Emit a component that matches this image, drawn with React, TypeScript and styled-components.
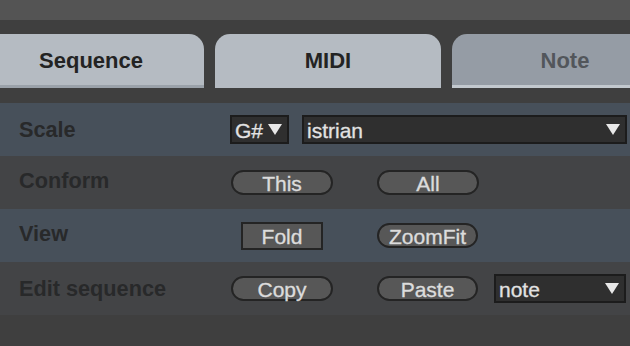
import styled, { createGlobalStyle } from "styled-components";

const GlobalStyle = createGlobalStyle`
  html, body {
    margin: 0;
    padding: 0;
    background: #3f3f3f;
  }
  body {
    font-family: "Liberation Sans", Arial, sans-serif;
  }
`;

const Device = styled.div`
  width: 630px;
  height: 346px;
  background: #3f3f3f;
  overflow: hidden;
  display: flex;
  flex-direction: column;
`;

const TopStrip = styled.div`
  height: 20px;
  background: #545454;
`;

const TabBar = styled.div`
  display: flex;
  gap: 11px;
  margin: 14px 0 15px -22px;
  height: 54px;
`;

interface TabProps {
  variant: "idle" | "active" | "dim";
}

const Tab = styled.div<TabProps>`
  flex: 0 0 226px;
  height: 54px;
  box-sizing: border-box;
  border-radius: 15px 15px 0 0;
  display: flex;
  align-items: center;
  justify-content: center;
  padding-top: 3px;
  font-size: 22px;
  font-weight: bold;
  background: ${(p) => (p.variant === "dim" ? "#959ca5" : "#b5bbc2")};
  color: ${(p) => (p.variant === "dim" ? "#52565b" : "#232323")};
  border-bottom: 3px solid
    ${(p) =>
      p.variant === "idle"
        ? "#9aa1a9"
        : p.variant === "dim"
        ? "#c2c8ce"
        : "#b5bbc2"};
`;

const Row = styled.div<{ tinted?: boolean }>`
  display: grid;
  grid-template-columns: 211px 1fr;
  align-items: center;
  height: 53px;
  padding-left: 19px;
  background: ${(p) => (p.tinted ? "#47505a" : "#434446")};
`;

const Label = styled.div<{ lift?: number }>`
  font-size: 21.7px;
  font-weight: bold;
  color: #28292a;
  margin-top: ${(p) => -(p.lift || 0)}px;
`;

const Controls = styled.div`
  display: flex;
  align-items: center;
`;

interface ButtonProps {
  shape?: "pill" | "square";
  w?: number;
  indent?: number;
}

const Button = styled.div<ButtonProps>`
  box-sizing: border-box;
  width: ${(p) => p.w || 102}px;
  height: ${(p) => (p.shape === "square" ? 28 : 25)}px;
  margin-left: ${(p) => p.indent || 0}px;
  border: 2px solid #242424;
  border-radius: ${(p) => (p.shape === "square" ? "0" : "13px")};
  background: #575757;
  color: #dcdcdc;
  font-size: 21px;
  -webkit-text-stroke: 0.35px #dcdcdc;
  display: flex;
  align-items: center;
  justify-content: center;
  line-height: 1;
  padding-top: 1px;
`;

const Select = styled.div<{ w: number; indent?: number }>`
  box-sizing: border-box;
  width: ${(p) => p.w}px;
  height: 29px;
  margin-left: ${(p) => p.indent || 0}px;
  background: #2f2f2f;
  border: 2px solid #1c1c1c;
  color: #e2e2e2;
  font-size: 21px;
  -webkit-text-stroke: 0.3px #e2e2e2;
  display: flex;
  align-items: center;
  justify-content: space-between;
  padding: 2px 5px 0 3px;
`;

const Arrow = styled.svg`
  width: 14px;
  height: 11px;
  flex: none;
  margin-top: -3px;
`;

const Caret = () => (
  <Arrow viewBox="0 0 14 11">
    <polygon points="0,0 14,0 7,11" fill="#e8e8e8" />
  </Arrow>
);

export default function App() {
  return (
    <>
      <GlobalStyle />
      <Device>
        <TopStrip />
        <TabBar>
          <Tab variant="idle">Sequence</Tab>
          <Tab variant="active">MIDI</Tab>
          <Tab variant="dim">Note</Tab>
        </TabBar>

        <Row tinted>
          <Label>Scale</Label>
          <Controls>
            <Select w={59}>
              G#
              <Caret />
            </Select>
            <Select w={325} indent={13}>
              istrian
              <Caret />
            </Select>
          </Controls>
        </Row>

        <Row>
          <Label lift={3}>Conform</Label>
          <Controls>
            <Button indent={1}>This</Button>
            <Button indent={44}>All</Button>
          </Controls>
        </Row>

        <Row tinted>
          <Label lift={4}>View</Label>
          <Controls>
            <Button shape="square" w={82} indent={11}>
              Fold
            </Button>
            <Button w={101} indent={54}>
              ZoomFit
            </Button>
          </Controls>
        </Row>

        <Row>
          <Label>Edit sequence</Label>
          <Controls>
            <Button indent={1}>Copy</Button>
            <Button w={101} indent={44}>
              Paste
            </Button>
            <Select w={132} indent={16}>
              note
              <Caret />
            </Select>
          </Controls>
        </Row>
      </Device>
    </>
  );
}
